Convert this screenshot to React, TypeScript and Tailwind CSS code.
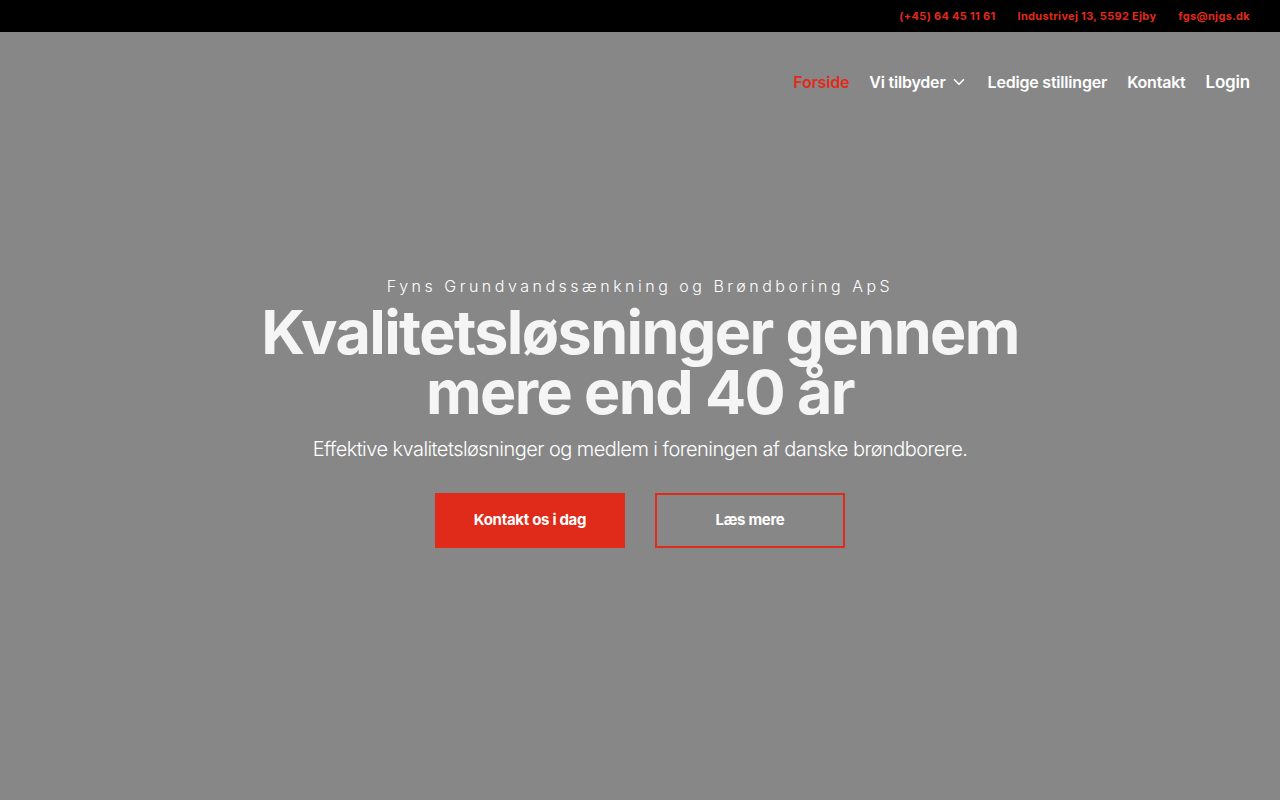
import { ChevronDown } from 'lucide-react';

const font = { fontFamily: 'Inter, "Noto Sans", sans-serif' };

export default function App() {
  return (
    <div className="min-h-[800px] flex flex-col bg-[#878787]" style={font}>
      {/* top bar */}
      <div className="h-8 bg-black flex items-center justify-end gap-[22px] pr-[30px] text-[11px] font-bold text-[#e02a1a] tracking-[0.3px]">
        <span>(+45) 64 45 11 61</span>
        <span>Industrivej 13, 5592 Ejby</span>
        <span>fgs@njgs.dk</span>
      </div>

      {/* nav */}
      <nav className="h-[100px] flex items-center justify-end gap-5 pr-[30px] text-[16px] font-semibold text-white tracking-[-0.2px]">
        <a className="text-[#e02a1a]">Forside</a>
        <a className="flex items-center gap-1">
          Vi tilbyder <ChevronDown size={18} strokeWidth={2.2} />
        </a>
        <a>Ledige stillinger</a>
        <a>Kontakt</a>
        <a className="text-[17px] mt-[2px]">Login</a>
      </nav>

      {/* hero */}
      <section className="flex-1 flex flex-col items-center pt-[142px] text-center text-white">
        <p className="text-[16px] font-light tracking-[3.5px] leading-6">
          Fyns Grundvandssænkning og Brøndboring ApS
        </p>
        <h1 className="mt-[4px] text-[61px] font-bold leading-[60px] tracking-[-1.6px] text-[#f5f5f5] max-w-[800px]">
          Kvalitetsløsninger gennem mere end 40 år
        </h1>
        <p className="mt-[13px] text-[20px] font-light tracking-[-0.55px] leading-7">
          Effektive kvalitetsløsninger og medlem i foreningen af danske brøndborere.
        </p>
        <div className="mt-[30px] flex gap-[30px]">
          <button className="w-[190px] h-[55px] bg-[#e02a1a] text-white text-[15px] font-bold tracking-[-0.3px]">
            Kontakt os i dag
          </button>
          <button className="w-[190px] h-[55px] border-2 border-[#e02a1a] text-white text-[15px] font-bold tracking-[-0.3px]">
            Læs mere
          </button>
        </div>
      </section>
    </div>
  );
}
